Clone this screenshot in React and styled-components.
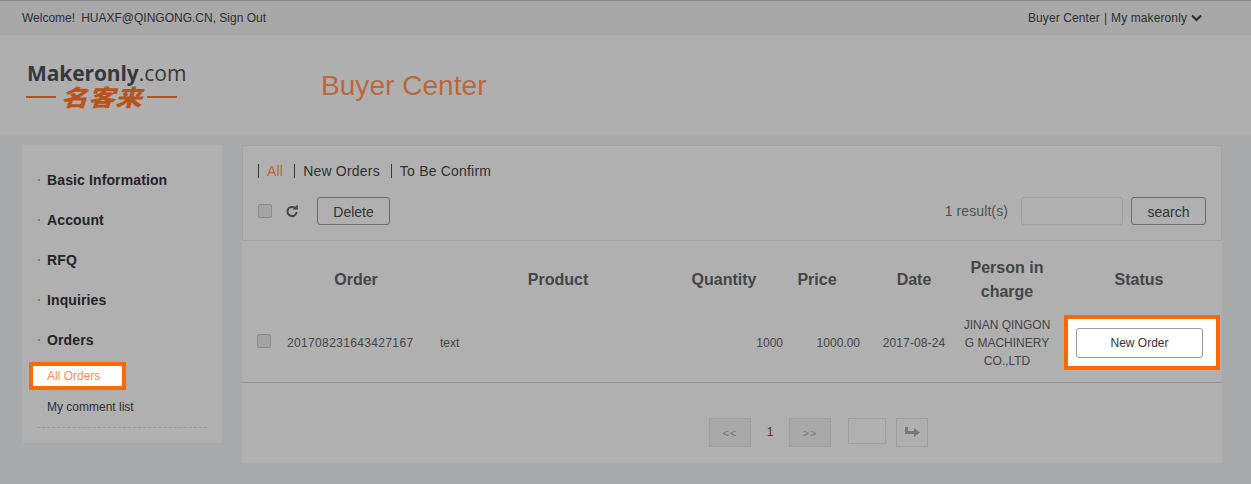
import React from 'react';
import styled, { createGlobalStyle } from 'styled-components';

const GlobalStyle = createGlobalStyle`
  html, body {
    margin: 0;
    padding: 0;
    background: #a9aaac;
    font-family: "Liberation Sans", Arial, sans-serif;
    color: #333;
  }
  * { box-sizing: border-box; }
`;

const Page = styled.div`
  width: 1251px;
  height: 484px;
  overflow: hidden;
  background: #a9aaac;
`;

const TopBar = styled.div`
  display: flex;
  justify-content: space-between;
  align-items: center;
  height: 35px;
  padding: 0 49px 0 22px;
  background: #a8a8a8;
  border-top: 1px solid #8a8a8a;
  font-size: 12px;
  color: #2e2e30;
`;

const Welcome = styled.span`
  display: flex;
  gap: 6px;
`;

const UserMenu = styled.span`
  display: flex;
  align-items: center;
  gap: 4px;
  letter-spacing: 0.1px;
`;

const Divider = styled.span`
  color: #3a2a4a;
`;

const Header = styled.div`
  display: flex;
  align-items: center;
  height: 100px;
  padding-left: 26px;
  background: #afafaf;
`;

const Logo = styled.div`
  width: 163px;
  display: flex;
  flex-direction: column;
  margin-top: -1px;
`;

const LogoName = styled.div`
  font-family: "Open Sans", sans-serif;
  font-size: 21px;
  line-height: 24px;
  font-weight: 700;
  color: #37383a;
  padding-left: 1px;
  letter-spacing: -0.1px;
  white-space: nowrap;
  span {
    font-weight: 400;
    letter-spacing: 0;
  }
`;

const LogoCn = styled.div`
  display: flex;
  align-items: center;
  gap: 5px;
  height: 24px;
  font-family: "Noto Sans CJK SC", sans-serif;
  font-size: 27px;
  line-height: 24px;
  font-weight: 900;
  font-style: italic;
  color: #b9531a;
`;

const LogoGlyphs = styled.span`
  display: block;
  transform: scaleY(0.84);
  white-space: nowrap;
`;

const LogoLine = styled.i`
  flex: none;
  width: 30px;
  height: 2px;
  background: #b9531a;
`;

const Title = styled.h1`
  margin: 2px 0 0 132px;
  font-size: 28px;
  font-weight: 400;
  letter-spacing: 0.05px;
  color: #b9683c;
`;

const Body = styled.div`
  display: flex;
  gap: 20px;
  padding: 10px 0 0 22px;
`;

const Sidebar = styled.aside`
  width: 200px;
  height: 298px;
  padding: 15px 15px 0 7px;
  background: #b0b0b0;
`;

const SideItem = styled.div`
  display: flex;
  align-items: center;
  height: 40px;
  font-size: 14px;
  font-weight: 700;
  letter-spacing: 0.12px;
  color: #242427;
  &::before {
    content: '';
    width: 2px;
    height: 2px;
    margin: 0 7px 0 9px;
    background: #b9683c;
  }
`;

const ActiveSub = styled.div`
  width: 97px;
  height: 28px;
  margin-top: 2px;
  padding-left: 14px;
  border: 4px solid #ff6a00;
  background: #fff;
  font-size: 12px;
  line-height: 20px;
  color: #ff8a5c;
`;

const SubItem = styled.div`
  padding: 10px 0 13px 18px;
  font-size: 12px;
  line-height: 14px;
  color: #2e2e38;
`;

const DashLine = styled.div`
  margin-left: 8px;
  border-top: 1px dashed #979797;
`;

const Main = styled.main`
  width: 980px;
`;

const Toolbar = styled.section`
  height: 96px;
  padding: 16px 15px 0 15px;
  border: 1px solid #a2a2a2;
  background: #b0b0b0;
`;

const Tabs = styled.div`
  display: flex;
  height: 18px;
  align-items: center;
  font-size: 14px;
  letter-spacing: 0.2px;
  color: #303034;
`;

const Tab = styled.span`
  padding-left: 8px;
  margin-right: 11px;
  line-height: 14px;
  border-left: 1px solid #3a3a3a;
  color: ${props => (props.$active ? '#b9683c' : '#303034')};
`;

const Actions = styled.div`
  display: flex;
  align-items: center;
  margin-top: 17px;
`;

const Check = styled.span`
  display: block;
  width: 14px;
  height: 14px;
  border: 1px solid #8c8c8c;
  border-radius: 2px;
  background: #a4a4a4;
`;

const Refresh = styled.span`
  display: flex;
  margin: 0 18px 0 13px;
  color: #454545;
`;

const Button = styled.button`
  height: 28px;
  width: ${props => props.$w}px;
  padding: 2px 0 0;
  border: 1px solid #6e6e6e;
  border-radius: 3px;
  background: transparent;
  font-family: inherit;
  font-size: 14px;
  color: #333;
`;

const Spacer = styled.div`
  flex: 1;
`;

const ResultCount = styled.span`
  margin-right: 13px;
  font-size: 14px;
  letter-spacing: 0.1px;
  color: #505050;
`;

const SearchBox = styled.input`
  width: 102px;
  height: 28px;
  margin-right: 8px;
  border: 1px solid #9e9e9e;
  border-radius: 3px;
  background: transparent;
`;

const TablePanel = styled.section`
  height: 222px;
  background: #b0b0b0;
`;

const COLUMNS = '38px 152px 252px 80px 106px 88px 98px 166px';

const HeadRow = styled.div`
  display: grid;
  grid-template-columns: ${COLUMNS};
  align-items: center;
  height: 73px;
  padding-top: 5px;
  font-size: 16px;
  line-height: 24px;
  font-weight: 700;
  color: #454545;
  text-align: center;
`;

const DataRow = styled.div`
  display: grid;
  grid-template-columns: ${COLUMNS};
  align-items: center;
  height: 69px;
  padding-bottom: 11px;
  border-bottom: 1px solid #959595;
  font-size: 12px;
  color: #444;
`;

const CheckCell = styled.div`
  padding: 0 0 4px 15px;
`;

const Cell = styled.div`
  text-align: ${props => props.$align || 'center'};
  padding: ${props => props.$pad || '0'};
  letter-spacing: ${props => props.$ls || 'normal'};
`;

const QuantityCell = styled.div`
  margin-right: -19px;
  text-align: right;
`;

const CompanyCell = styled.div`
  text-align: center;
  line-height: 18px;
  word-break: break-all;
  padding: 0 5px;
`;

const StatusCell = styled.div`
  width: 156px;
  height: 55px;
  margin-left: 8px;
  display: flex;
  align-items: center;
  padding-left: 8px;
  border: 4px solid #ff6a00;
  background: #fff;
`;

const StatusButton = styled.button`
  width: 127px;
  height: 30px;
  padding: 0;
  border: 1px solid #9a9a9a;
  border-radius: 3px;
  background: #fff;
  font-family: inherit;
  font-size: 12px;
  color: #333;
`;

const Pager = styled.div`
  display: flex;
  align-items: flex-start;
  padding: 35px 0 0 467px;
`;

const PageBtn = styled.span`
  display: flex;
  align-items: center;
  justify-content: center;
  width: 42px;
  height: 29px;
  border: 1px solid #9f9f9f;
  background: #a9a9a9;
  font-size: 11px;
  letter-spacing: 1px;
  color: #787878;
`;

const PageNum = styled.span`
  width: 38px;
  line-height: 29px;
  text-align: center;
  font-size: 12px;
  color: #5a2d2d;
`;

const PageInput = styled.span`
  width: 38px;
  height: 26px;
  margin-left: 17px;
  border: 1px solid #9f9f9f;
`;

const GoBtn = styled.span`
  display: flex;
  align-items: center;
  justify-content: center;
  width: 32px;
  height: 29px;
  margin-left: 10px;
  border: 1px solid #9f9f9f;
`;

export default function App() {
  return (
    <Page>
      <GlobalStyle />
      <TopBar>
        <Welcome>
          <span>Welcome!</span>
          <span>HUAXF@QINGONG.CN, Sign Out</span>
        </Welcome>
        <UserMenu>
          <span>Buyer Center</span>
          <Divider>|</Divider>
          <span>My makeronly</span>
          <svg width="11" height="8" viewBox="0 0 11 8">
            <path d="M1 1.5 L5.5 6 L10 1.5" fill="none" stroke="#2e2e30" strokeWidth="2.2" />
          </svg>
        </UserMenu>
      </TopBar>
      <Header>
        <Logo>
          <LogoName>Makeronly<span>.com</span></LogoName>
          <LogoCn>
            <LogoLine />
            <LogoGlyphs>名客来</LogoGlyphs>
            <LogoLine />
          </LogoCn>
        </Logo>
        <Title>Buyer Center</Title>
      </Header>
      <Body>
        <Sidebar>
          <SideItem>Basic Information</SideItem>
          <SideItem>Account</SideItem>
          <SideItem>RFQ</SideItem>
          <SideItem>Inquiries</SideItem>
          <SideItem>Orders</SideItem>
          <ActiveSub>All Orders</ActiveSub>
          <SubItem>My comment list</SubItem>
          <DashLine />
        </Sidebar>
        <Main>
          <Toolbar>
            <Tabs>
              <Tab $active>All</Tab>
              <Tab>New Orders</Tab>
              <Tab>To Be Confirm</Tab>
            </Tabs>
            <Actions>
              <Check />
              <Refresh>
                <svg width="14" height="14" viewBox="0 0 14 14">
                  <path d="M10 4 A4.6 4.6 0 1 0 11.6 8" fill="none" stroke="currentColor" strokeWidth="2" />
                  <path d="M7.5 5.5 L13 5.5 L12.5 0.5 Z" fill="currentColor" />
                </svg>
              </Refresh>
              <Button $w={73}>Delete</Button>
              <Spacer />
              <ResultCount>1 result(s)</ResultCount>
              <SearchBox />
              <Button $w={75}>search</Button>
            </Actions>
          </Toolbar>
          <TablePanel>
            <HeadRow>
              <span />
              <span>Order</span>
              <span>Product</span>
              <span>Quantity</span>
              <span>Price</span>
              <span>Date</span>
              <span>Person in charge</span>
              <span>Status</span>
            </HeadRow>
            <DataRow>
              <CheckCell><Check /></CheckCell>
              <Cell $align="left" $pad="0 0 0 7px" $ls="0.35px">201708231643427167</Cell>
              <Cell $align="left" $pad="0 0 0 8px">text</Cell>
              <QuantityCell>1000</QuantityCell>
              <Cell $align="right" $pad="0 10px 0 0">1000.00</Cell>
              <Cell $ls="0.1px">2017-08-24</Cell>
              <CompanyCell>JINAN QINGONG MACHINERY CO.,LTD</CompanyCell>
              <StatusCell><StatusButton>New Order</StatusButton></StatusCell>
            </DataRow>
            <Pager>
              <PageBtn>&lt;&lt;</PageBtn>
              <PageNum>1</PageNum>
              <PageBtn>&gt;&gt;</PageBtn>
              <PageInput />
              <GoBtn>
                <svg width="17" height="13" viewBox="0 0 17 13">
                  <path d="M1 1 H4 V5 H10 V2 L16 6.5 L10 11 V8 H1 Z" fill="#787878" />
                </svg>
              </GoBtn>
            </Pager>
          </TablePanel>
        </Main>
      </Body>
    </Page>
  );
}
